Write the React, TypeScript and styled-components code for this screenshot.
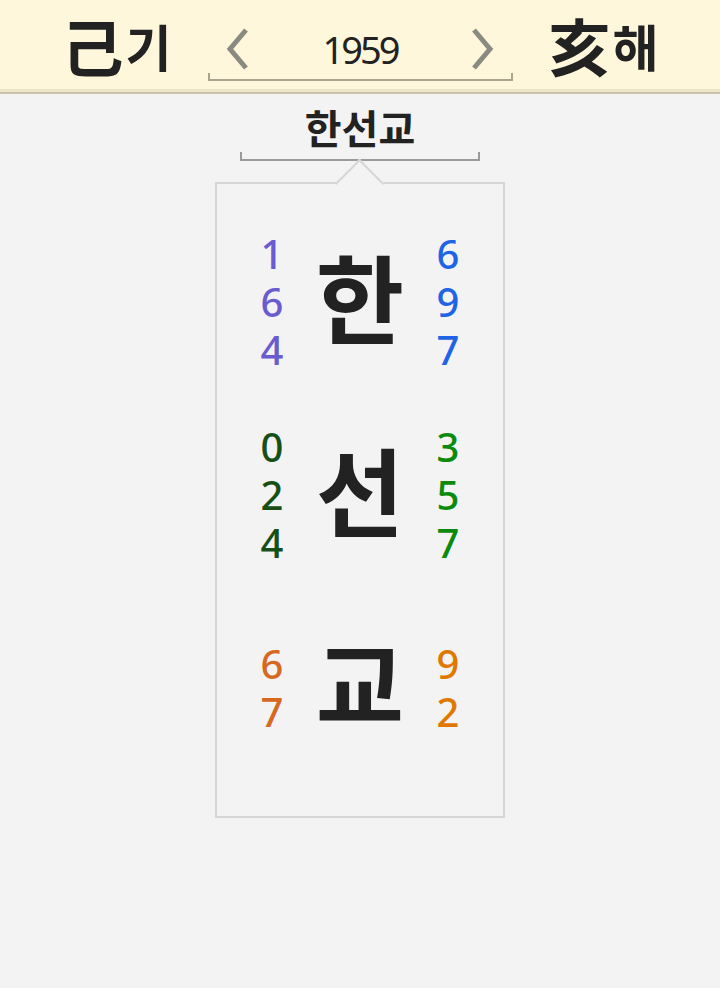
import styled, { createGlobalStyle } from 'styled-components';

const GlobalStyle = createGlobalStyle`
  html, body {
    margin: 0;
    padding: 0;
    background-color: #f3f3f3;
  }
  body {
    font-family: 'Noto Sans CJK KR', 'Noto Sans', sans-serif;
    color: #222;
  }
`;

interface Syllable {
  char: string;
  left: string[];
  right: string[];
  leftColor: string;
  rightColor: string;
}

const syllables: Syllable[] = [
  { char: '한', left: ['1', '6', '4'], right: ['6', '9', '7'], leftColor: '#6b5bd0', rightColor: '#1f64e6' },
  { char: '선', left: ['0', '2', '4'], right: ['3', '5', '7'], leftColor: '#165016', rightColor: '#0b8a0b' },
  { char: '교', left: ['6', '7'], right: ['9', '2'], leftColor: '#d6691f', rightColor: '#e07800' },
];

const Chevron = ({ dir }: { dir: 'left' | 'right' }) => (
  <svg width="28" height="44" viewBox="0 0 28 44">
    <polyline
      points={dir === 'left' ? '22,3 6,22 22,41' : '6,3 22,22 6,41'}
      fill="none"
      stroke="#8a8a82"
      strokeWidth="5"
    />
  </svg>
);

const App = () => {
  return (
    <>
      <GlobalStyle />
      <Header>
        <Pillar>
          <Hanja>己</Hanja>
          <Hangul>기</Hangul>
        </Pillar>
        <YearNav>
          <YearRow>
            <NavButton>
              <Chevron dir="left" />
            </NavButton>
            <Year>1959</Year>
            <NavButton>
              <Chevron dir="right" />
            </NavButton>
          </YearRow>
          <Bracket color="#a8a48e" />
        </YearNav>
        <Pillar>
          <Hanja>亥</Hanja>
          <Hangul>해</Hangul>
        </Pillar>
      </Header>

      <Main>
        <Name>한선교</Name>
        <TitleBracket color="#9a9a9a" />
        <Card>
          {syllables.map((s) => (
            <Row key={s.char}>
              <Digits color={s.leftColor}>
                {s.left.map((d, i) => (
                  <Digit key={i}>{d}</Digit>
                ))}
              </Digits>
              <BigChar>{s.char}</BigChar>
              <Digits color={s.rightColor}>
                {s.right.map((d, i) => (
                  <Digit key={i}>{d}</Digit>
                ))}
              </Digits>
            </Row>
          ))}
        </Card>
      </Main>
    </>
  );
};

export default App;

const Header = styled.header`
  display: flex;
  justify-content: center;
  align-items: center;
  gap: 36px;
  height: 89px;
  background-color: #fff7dc;
  border-bottom: 3px solid #ece4c6;
  box-shadow: 0 2px 0 #c9c3ab;
`;

const Pillar = styled.div`
  display: flex;
  align-items: center;
  gap: 2px;
  font-weight: 700;
  color: #222;
`;

const Hanja = styled.span`
  font-size: 62px;
  line-height: 1;
`;

const Hangul = styled.span`
  font-size: 50px;
  line-height: 1;
`;

const YearNav = styled.div`
  display: flex;
  flex-direction: column;
  width: 305px;
  padding-top: 16px;
`;

const YearRow = styled.div`
  display: flex;
  align-items: center;
  justify-content: space-between;
  padding: 0 16px;
  height: 48px;
`;

const NavButton = styled.div`
  display: flex;
  cursor: pointer;
`;

const Year = styled.div`
  font-family: 'Noto Sans', sans-serif;
  font-size: 38px;
  letter-spacing: -3px;
  line-height: 1;
  color: #222;
`;

const Bracket = styled.div<{ color: string }>`
  height: 6px;
  border: 2px solid ${(p) => p.color};
  border-top: none;
`;

const TitleBracket = styled(Bracket)`
  width: 236px;
  height: 7px;
`;

const Main = styled.main`
  display: flex;
  flex-direction: column;
  align-items: center;
  padding-top: 10px;
`;

const Name = styled.div`
  font-size: 40px;
  font-weight: 700;
  line-height: 50px;
  color: #222;
`;

const Card = styled.div`
  position: relative;
  box-sizing: border-box;
  width: 290px;
  height: 636px;
  margin-top: 21px;
  border: 2px solid #d6d6d6;
  padding: 21px 0 32px;

  &::before {
    content: '';
    position: absolute;
    top: -18px;
    left: 50%;
    width: 33px;
    height: 33px;
    margin-left: -18px;
    background-color: #f3f3f3;
    border-top: 2px solid #d6d6d6;
    border-left: 2px solid #d6d6d6;
    transform: rotate(45deg);
  }
`;

const Row = styled.div`
  display: flex;
  align-items: center;
  justify-content: center;
  gap: 18px;
  height: 193px;
`;

const Digits = styled.div<{ color: string }>`
  width: 40px;
  display: flex;
  flex-direction: column;
  align-items: center;
  gap: 10px;
  font-family: 'Noto Sans', sans-serif;
  font-size: 40px;
  font-weight: 500;
  color: ${(p) => p.color};
`;

const Digit = styled.div`
  height: 38px;
  line-height: 38px;
`;

const BigChar = styled.div`
  width: 100px;
  padding-bottom: 14px;
  text-align: center;
  font-size: 96px;
  font-weight: 700;
  line-height: 1;
  color: #222;
`;
